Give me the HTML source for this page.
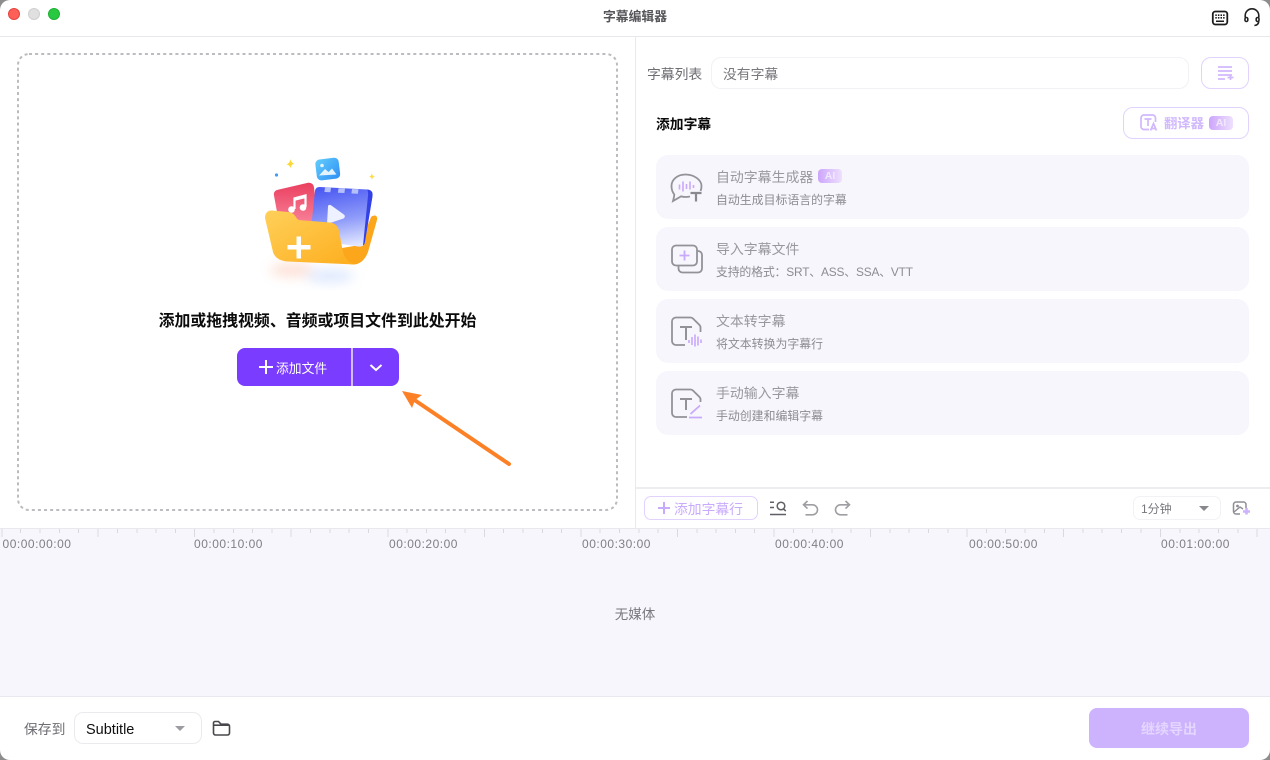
<!DOCTYPE html>
<html lang="zh">
<head>
<meta charset="utf-8">
<style>
*{box-sizing:border-box;margin:0;padding:0}
html,body{width:1270px;height:760px;overflow:hidden;background:#8d8d8d}
body{font-family:"Liberation Sans","Noto Sans CJK SC",sans-serif;position:relative}
#w{position:absolute;left:0;top:0;width:1270px;height:760px;background:#fff;border-radius:10px;overflow:hidden}
.a{position:absolute;white-space:nowrap}
.card{position:absolute;left:656px;width:593px;height:64px;background:#f7f6fc;border-radius:12px}
.t{position:absolute;left:60px;top:13px;font-size:13.9px;line-height:18px;color:#98989e;white-space:nowrap}
.s{position:absolute;left:60px;top:37px;font-size:11.9px;line-height:16px;color:#8c8c92;white-space:nowrap}
.card svg{position:absolute;left:14px;top:16px}
.ai{position:absolute;width:24px;height:14px;border-radius:4px;background:linear-gradient(90deg,#cca5fb,#eee0fd);color:#f1e8fe;font-size:10.5px;font-weight:bold;line-height:14px;text-align:center}
.tc{position:absolute;top:537px;width:80px;margin-left:-40px;text-align:center;font-size:12px;line-height:14px;color:#7f7f87;letter-spacing:.5px}
</style>
</head>
<body>
<div id="w">
  <div class="a" style="left:8px;top:8px;width:12px;height:12px;border-radius:50%;background:#fe5f57;border:.5px solid #e5453f"></div>
  <div class="a" style="left:28px;top:8px;width:12px;height:12px;border-radius:50%;background:#e0e0e0;border:.5px solid #cfcfcf"></div>
  <div class="a" style="left:48px;top:8px;width:12px;height:12px;border-radius:50%;background:#28c840;border:.5px solid #1fb134"></div>
  <div class="a" style="left:535px;top:8px;width:200px;text-align:center;font-size:12.8px;line-height:17px;font-weight:bold;color:#55555a">字幕编辑器</div>

  <svg class="a" style="left:1210px;top:9px" width="20" height="18" viewBox="0 0 20 18" fill="none">
    <rect x="2.800" y="2.500" width="14.500" height="13" rx="2.600" stroke="#1c1c1c" stroke-width="1.800"/>
    <path d="M5.300 6.200h1.500M7.900 6.200h1.500M10.500 6.200h1.500M13.100 6.200h1.500M5.300 8.800h1.500M7.900 8.800h1.500M10.500 8.800h1.500M13.100 8.800h1.500" stroke="#1c1c1c" stroke-width="1.600"/>
    <path d="M6 12.300h8" stroke="#1c1c1c" stroke-width="1.500"/>
  </svg>
  <svg class="a" style="left:1243px;top:8px" width="18" height="20" viewBox="0 0 18 20" fill="none" stroke="#222" stroke-width="1.600">
    <path d="M2.200 9.500V7.600a6.800 6.800 0 0 1 13.600 0V9.500"/>
    <rect x="2" y="9.500" width="2.800" height="4" rx="1.400"/>
    <rect x="13.200" y="9.500" width="2.800" height="4" rx="1.400"/>
    <path d="M15.800 13.500c-.3 2.400-2 3.800-4.400 4"/>
  </svg>

  <div class="a" style="left:0;top:36px;width:1270px;height:1px;background:#e7e7ec"></div>
  <div class="a" style="left:635px;top:37px;width:1px;height:491px;background:#e9e9ee"></div>

  <svg class="a" style="left:17px;top:53px" width="601" height="458" fill="none">
    <rect x="1" y="1" width="599" height="456" rx="11" stroke="#bcbcc0" stroke-width="2" stroke-dasharray="3 3.100"/>
  </svg>

  <svg class="a" style="left:230px;top:140px" width="170" height="150" viewBox="0 0 170 150">
    <defs>
      <linearGradient id="gb" x1="0" y1="0" x2="1" y2="1"><stop offset="0" stop-color="#62cdfc"/><stop offset="1" stop-color="#2f8ff5"/></linearGradient>
      <linearGradient id="gr" x1="0" y1="0" x2="0" y2="1"><stop offset="0" stop-color="#ea3f5f"/><stop offset="1" stop-color="#f98aa0"/></linearGradient>
      <linearGradient id="gv" x1=".4" y1="0" x2=".6" y2="1"><stop offset="0" stop-color="#4d5bf3"/><stop offset=".55" stop-color="#8e9bf9"/><stop offset="1" stop-color="#e2e7ff"/></linearGradient>
      <linearGradient id="gf" x1="0" y1="0" x2="1" y2="1"><stop offset="0" stop-color="#ffd05a"/><stop offset="1" stop-color="#fdae1e"/></linearGradient>
      <filter id="bl" x="-50%" y="-100%" width="200%" height="300%"><feGaussianBlur stdDeviation="6"/></filter>
    </defs>
    <ellipse cx="62" cy="130" rx="22" ry="6" fill="#fbb29a" opacity=".45" filter="url(#bl)"/>
    <ellipse cx="100" cy="136" rx="24" ry="6" fill="#b6cefd" opacity=".5" filter="url(#bl)"/>
    <path d="M60.500 19C60.800 21 61.500 22.500 64 23.500 62 24.300 61.300 25.500 60.500 28 59.800 26 59 25 56.500 24.500 59 23.500 60 21.500 60.500 19Z" fill="#fdd835"/>
    <path d="M141.800 33C142.100 35 142.800 36 145 36.500 143 37 142.400 38 142 40 141.600 38 141 37.200 139 36.800 141 36 141.500 35 141.800 33Z" fill="#fddc4b"/>
    <circle cx="46.500" cy="35" r="1.600" fill="#3e9ff5"/>
    <rect x="86" y="18.500" width="23.500" height="21" rx="4.500" transform="rotate(-7 98 29)" fill="url(#gb)"/>
    <circle cx="92" cy="25.500" r="1.800" fill="#e4f4ff"/>
    <path d="M89 35.500l6-6.500 3.500 3 3.500-3.500 4.500 6z" fill="#e4f4ff"/>
    <path d="M49 49.500L77 43c4-.8 6.500 1 7 4.500l4 35-38 6-6-33c-.6-3 .8-5.300 5-6z" fill="url(#gr)"/>
    <path d="M64.500 69V58.500l11-3V67" fill="none" stroke="#fff" stroke-width="2.200"/>
    <path d="M64 57.500l12-3v3.500l-12 3z" fill="#fff"/>
    <circle cx="61.500" cy="69.500" r="3.300" fill="#fff"/><circle cx="73" cy="67.500" r="3.300" fill="#fff"/>
    <path d="M112 108L130 105 141 77C145 74 148 76 147 80L138 112C135 120 130 124 124 124.500 115 124.500 111 118 109 108Z" fill="#fca61c"/>
    <path d="M90 47L137 49.500C141.500 50 143 52 142.500 56L135 102C134 106 132 107 128 106.500L84 100C81 99 80 97 80.500 94L85 51C85.500 48 87 47 90 47Z" fill="url(#gv)"/>
    <path d="M137 49.500C141.500 50 143 52 142.500 56L135 102C134.500 104 134 105 133 105.500L138 56C138.300 53 138 50.500 137 49.500Z" fill="#3441e6"/>
    <path d="M95 47.500l6 .3-.6 4.500-6-.3zM108.500 48.200l6.500.3-.6 4.500-6.500-.3zM122 49l6.500.3-.6 4.500-6.500-.3z" fill="#b5c0fb"/>
    <path d="M98 66.500c0-1.500 1.500-2 3-1.200l12.500 9c1.800 1.300 1.800 3 0 4.200L97 84z" fill="#eef1ff"/>
    <path d="M35 78C35 73 38 70 42 70.500L58 72C62 72.500 64 74 66 77 67 79 68 80 71 80.300L100 82.500C105 83 108 86 109 91L112 107C113.500 117 117 122 125 124.500L58 121.500C50 121 45 118 43 112Z" fill="url(#gf)"/>
    <path d="M66.500 96.500h4.500v8.500h9.500v4.500H71v9h-4.500v-9H57.500v-4.500h9z" fill="#fff"/>
  </svg>

  <div class="a" style="left:0;top:310px;width:635px;text-align:center;font-size:15.900px;line-height:23px;font-weight:bold;color:#0b0b0b">添加或拖拽视频、音频或项目文件到此处开始</div>

  <div class="a" style="left:237px;top:348px;width:162px;height:38px;background:#7a3cfe;border-radius:8px"></div>
  <div class="a" style="left:351px;top:348px;width:2px;height:38px;background:#d4bdff"></div>
  <svg class="a" style="left:258px;top:359px" width="16" height="16" fill="none" stroke="#fff" stroke-width="2"><path d="M8 1v14M1 8h14"/></svg>
  <div class="a" style="left:276px;top:360px;font-size:12.800px;line-height:17px;color:#fff">添加文件</div>
  <svg class="a" style="left:369px;top:363px" width="14" height="10" fill="none" stroke="#fff" stroke-width="2"><path d="M1.500 2l5.500 5 5.500-5"/></svg>

  <svg class="a" style="left:395px;top:385px" width="125" height="90" fill="none">
    <path d="M114 79L18 14" stroke="#fc8126" stroke-width="4" stroke-linecap="round"/>
    <path d="M7 6L27 10 20 15 17 23Z" fill="#fc8126"/>
  </svg>

  <div class="a" style="left:647px;top:66px;font-size:13.800px;line-height:18px;color:#6d6d73">字幕列表</div>
  <div class="a" style="left:711px;top:57px;width:478px;height:32px;border:1px solid #f2f2f6;border-radius:10px"></div>
  <div class="a" style="left:723px;top:66px;font-size:13.800px;line-height:18px;color:#77777d">没有字幕</div>
  <div class="a" style="left:1201px;top:57px;width:48px;height:32px;border:1px solid #e1d3fe;border-radius:10px"></div>
  <svg class="a" style="left:1217px;top:65px" width="20" height="16" fill="none" stroke="#d1b8fd" stroke-width="1.700"><path d="M1 2h14M1 6h14M1 10h14M1 14h7M10.500 12.500h6M13.500 10v5"/></svg>

  <div class="a" style="left:656px;top:116px;font-size:13.800px;line-height:18px;font-weight:bold;color:#0a0a0a">添加字幕</div>
  <div class="a" style="left:1123px;top:107px;width:126px;height:32px;border:1px solid #e1d3fe;border-radius:10px"></div>
  <svg class="a" style="left:1140px;top:114px" width="19" height="18" fill="none" stroke="#d1b8fd" stroke-width="1.700">
    <path d="M9 15.500H4a3 3 0 0 1-3-3V4a3 3 0 0 1 3-3h8.500a3 3 0 0 1 3 3v4"/>
    <path d="M4.500 5h7M8 5v7M10.500 16.500l3-7 3 7M11.500 14.500h4"/>
  </svg>
  <div class="a" style="left:1164px;top:115px;font-size:13.300px;line-height:17px;font-weight:bold;color:#d1b8fd">翻译器</div>
  <div class="ai" style="left:1209px;top:116px">AI</div>

  <div class="card" style="top:155px">
    <svg width="34" height="32" viewBox="0 0 34 32" fill="none">
      <path d="M20 25.500c-1.500.3-3 .5-4.500.5-1.500 0-3-.2-4.400-.6L3 30c.5-2 1.200-4 1.300-6.500C2.300 21 1.500 18 1.500 15c0-6.500 6-11.500 14-11.500s16 5 16 11.500c0 2-.3 3.500-1 5" stroke="#929298" stroke-width="1.800"/>
      <path d="M9.500 13.500v5M13 10.500v10M16.500 13v5M20 10.500v8M23.500 14v3" stroke="#c8a9fb" stroke-width="1.600"/>
      <path d="M20.500 22h11M26 22v8.500" stroke="#88888e" stroke-width="2.200"/>
    </svg>
    <div class="t">自动字幕生成器</div>
    <div class="ai" style="left:162px;top:14px">AI</div>
    <div class="s">自动生成目标语言的字幕</div>
  </div>
  <div class="card" style="top:227px">
    <svg width="34" height="32" viewBox="0 0 34 32" fill="none" stroke="#929298" stroke-width="1.800">
      <rect x="2" y="2.500" width="25" height="20" rx="4"/>
      <path d="M8.500 23v2.500a4 4 0 0 0 4 4H28a4 4 0 0 0 4-4V12a4 4 0 0 0-4-4h-1"/>
      <path d="M9.500 12.500h10M14.500 7.500v10" stroke="#c8a9fb"/>
    </svg>
    <div class="t">导入字幕文件</div>
    <div class="s" style="letter-spacing:-.18px">支持的格式：SRT、ASS、SSA、VTT</div>
  </div>
  <div class="card" style="top:299px">
    <svg width="34" height="32" viewBox="0 0 34 32" fill="none" stroke="#929298" stroke-width="1.800">
      <path d="M15 30H6a4 4 0 0 1-4-4V6.500a4 4 0 0 1 4-4h14.500c1 0 2 .5 2.700 1.200l6.300 6.300c.8.800 1 1.500 1 2.500V17"/>
      <path d="M10 12h12M16 12v13" stroke-width="2"/>
      <path d="M19 25v3M22 22v8M25 19.500v12M28 21.500v9M31 24.500v3.500" stroke="#c8a9fb" stroke-width="1.600"/>
    </svg>
    <div class="t">文本转字幕</div>
    <div class="s">将文本转换为字幕行</div>
  </div>
  <div class="card" style="top:371px">
    <svg width="34" height="32" viewBox="0 0 34 32" fill="none" stroke="#929298" stroke-width="1.800">
      <path d="M17 30H6a4 4 0 0 1-4-4V6.500a4 4 0 0 1 4-4h14.500c1 0 2 .5 2.700 1.200l6.300 6.300c.8.800 1 1.500 1 2.500V15"/>
      <path d="M10 12h12M16 12v11" stroke-width="2"/>
      <path d="M20.500 27L30 18.500M19 30.500h13" stroke="#c8a9fb" stroke-width="1.800"/>
    </svg>
    <div class="t">手动输入字幕</div>
    <div class="s">手动创建和编辑字幕</div>
  </div>

  <div class="a" style="left:636px;top:487px;width:634px;height:2px;background:#ececf1"></div>
  <div class="a" style="left:644px;top:496px;width:114px;height:24px;border:1px solid #e1d3fe;border-radius:7px"></div>
  <svg class="a" style="left:657px;top:501px" width="14" height="14" fill="none" stroke="#c9abfc" stroke-width="2"><path d="M7 1v12M1 7h12"/></svg>
  <div class="a" style="left:674px;top:501px;font-size:13.800px;line-height:18px;color:#c9abfc">添加字幕行</div>
  <svg class="a" style="left:769px;top:499px" width="18" height="18" fill="none" stroke="#5f5f65" stroke-width="1.500">
    <path d="M1 3.200h4M1 8.500h4M1 15.500h16"/>
    <circle cx="12" cy="7" r="3.800"/>
    <path d="M14.500 10l2.300 2"/>
  </svg>
  <svg class="a" style="left:802px;top:500px" width="17" height="16" fill="none" stroke="#9e9ea3" stroke-width="1.600"><path d="M5.500 1L1.500 4.800l4 3.800M2 4.800h8.500a5 5 0 0 1 0 10H3.500"/></svg>
  <svg class="a" style="left:834px;top:500px" width="17" height="16" fill="none" stroke="#9e9ea3" stroke-width="1.600"><path d="M11.500 1l4 3.800-4 3.800M15 4.800H6.500a5 5 0 0 0 0 10h7"/></svg>

  <div class="a" style="left:1133px;top:496px;width:88px;height:24px;border:1px solid #f2f2f6;border-radius:7px"></div>
  <div class="a" style="left:1141px;top:501px;font-size:12px;line-height:17px;color:#77777d">1分钟</div>
  <div class="a" style="left:1199px;top:506px;width:0;height:0;border-left:5px solid transparent;border-right:5px solid transparent;border-top:5px solid #87878d"></div>
  <svg class="a" style="left:1232px;top:500px" width="19" height="16" fill="none">
    <path d="M8 14H4a2.500 2.500 0 0 1-2.500-2.500v-7A2.500 2.500 0 0 1 4 2h7.500A2.500 2.500 0 0 1 14 4.500V8" stroke="#8e8e94" stroke-width="1.500"/>
    <circle cx="5.500" cy="6" r="1.400" fill="#8e8e94"/>
    <path d="M2 12l6-5 3 2" stroke="#8e8e94" stroke-width="1.400"/>
    <path d="M11 11.500h7M14.500 8v6.500" stroke="#cdb3fc" stroke-width="2.600"/>
  </svg>

  <div class="a" style="left:0;top:528px;width:1270px;height:168px;background:#f7f6fc"></div>
  <div class="a" style="left:0;top:528px;width:1270px;height:1px;background:#e8e8ed"></div>
  <svg class="a" style="left:0;top:529px" width="1270" height="10" stroke="#d9d9de" stroke-width="1">
    <path d="M2 0v8M20.500 0v4M40 0v4M59.500 0v4M78.500 0v4M98 0v8M117.500 0v4M137 0v4M156 0v4M175.500 0v4M194.500 0v8M214 0v4M233.500 0v4M252.500 0v4M272 0v4M291 0v8M310.500 0v4M330 0v4M349 0v4M368.500 0v4M388 0v8M407 0v4M426.500 0v4M445.500 0v4M465 0v4M484.500 0v8M503.500 0v4M523 0v4M542.500 0v4M561.500 0v4M581 0v8M600 0v4M619.500 0v4M639 0v4M658 0v4M677.500 0v8M697 0v4M716 0v4M735.500 0v4M754.500 0v4M774 0v8M793.500 0v4M812.500 0v4M832 0v4M851 0v4M870.500 0v8M890 0v4M909 0v4M928.500 0v4M948 0v4M967 0v8M986.500 0v4M1005.500 0v4M1025 0v4M1044.500 0v4M1063.500 0v8M1083 0v4M1102 0v4M1121.500 0v4M1141 0v4M1160.500 0v8M1180 0v4M1199 0v4M1218.500 0v4M1238 0v4M1257 0v8"/>
  </svg>
  <div class="tc" style="left:37px">00:00:00:00</div>
  <div class="tc" style="left:228.500px">00:00:10:00</div>
  <div class="tc" style="left:423.500px">00:00:20:00</div>
  <div class="tc" style="left:616.500px">00:00:30:00</div>
  <div class="tc" style="left:809.500px">00:00:40:00</div>
  <div class="tc" style="left:1003.500px">00:00:50:00</div>
  <div class="tc" style="left:1195.500px">00:01:00:00</div>
  <div class="a" style="left:0;top:606px;width:1270px;text-align:center;font-size:13.500px;line-height:18px;color:#77777d">无媒体</div>

  <div class="a" style="left:0;top:696px;width:1270px;height:1px;background:#e8e8ee"></div>
  <div class="a" style="left:24px;top:721px;font-size:13.800px;line-height:18px;color:#6d6d73">保存到</div>
  <div class="a" style="left:74px;top:712px;width:128px;height:32px;border:1px solid #ebebef;border-radius:9px"></div>
  <div class="a" style="left:86px;top:721px;font-size:14.500px;line-height:18px;color:#0f0f0f">Subtitle</div>
  <div class="a" style="left:175px;top:726px;width:0;height:0;border-left:5px solid transparent;border-right:5px solid transparent;border-top:5px solid #9b9ba1"></div>
  <svg class="a" style="left:212px;top:720px" width="20" height="17" fill="none" stroke="#48484c" stroke-width="1.600">
    <path d="M1.500 13V3A1.500 1.500 0 0 1 3 1.500h3.500L9 4.200h6.500a2 2 0 0 1 2 2V13a2 2 0 0 1-2 2H3.500a2 2 0 0 1-2-2zM1.500 5.200h15"/>
  </svg>
  <div class="a" style="left:1089px;top:708px;width:160px;height:40px;background:#cdb3fe;border-radius:8px;text-align:center;font-size:14px;line-height:42px;font-weight:bold;color:#e4d6fe">继续导出</div>
</div>
</body>
</html>
